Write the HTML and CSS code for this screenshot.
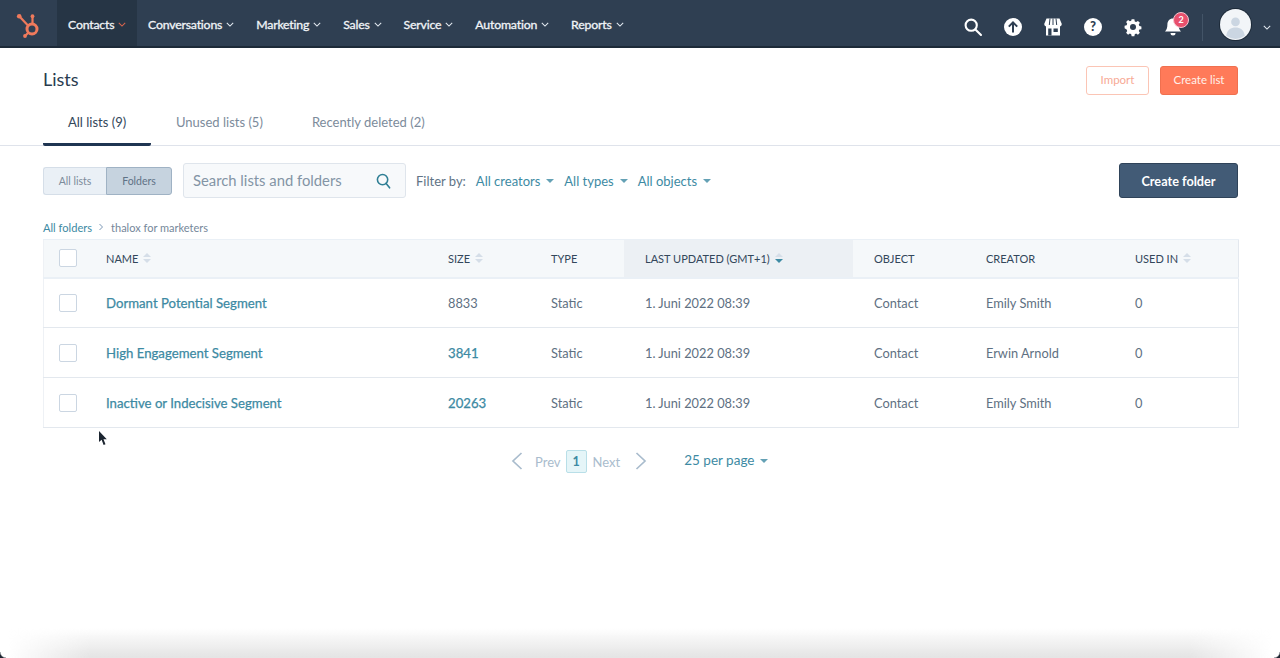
FILE: index.html
```html
<!DOCTYPE html>
<html lang="en">
<head>
<meta charset="utf-8">
<title>Lists</title>
<link rel="stylesheet" href="styles.css">
</head>
<body>
<header class="nav">
  <a class="logo" aria-label="HubSpot">
    <svg width="26" height="26" viewBox="0 0 26 26" fill="none">
      <circle cx="17" cy="17" r="5" stroke="#ef7a5c" stroke-width="3"/>
      <path d="M17.500 11V5" stroke="#ef7a5c" stroke-width="2.200"/>
      <circle cx="17.500" cy="4.200" r="1.900" fill="#ef7a5c"/>
      <path d="M13 13.500 5 5" stroke="#ef7a5c" stroke-width="2.200"/>
      <circle cx="4.200" cy="4.200" r="2.300" fill="#ef7a5c"/>
      <path d="M13.500 20.500 10 24" stroke="#ef7a5c" stroke-width="2.200"/>
      <circle cx="10" cy="24" r="1.900" fill="#ef7a5c"/>
    </svg>
  </a>
  <nav class="menu">
    <a class="menu-item menu-active">Contacts<svg class="chev chev-red" viewBox="0 0 10 6"><path d="M1 1l4 4 4-4"/></svg></a>
    <a class="menu-item">Conversations<svg class="chev" viewBox="0 0 10 6"><path d="M1 1l4 4 4-4"/></svg></a>
    <a class="menu-item">Marketing<svg class="chev" viewBox="0 0 10 6"><path d="M1 1l4 4 4-4"/></svg></a>
    <a class="menu-item">Sales<svg class="chev" viewBox="0 0 10 6"><path d="M1 1l4 4 4-4"/></svg></a>
    <a class="menu-item">Service<svg class="chev" viewBox="0 0 10 6"><path d="M1 1l4 4 4-4"/></svg></a>
    <a class="menu-item">Automation<svg class="chev" viewBox="0 0 10 6"><path d="M1 1l4 4 4-4"/></svg></a>
    <a class="menu-item">Reports<svg class="chev" viewBox="0 0 10 6"><path d="M1 1l4 4 4-4"/></svg></a>
  </nav>
  <div class="tools">
    <svg class="tool" viewBox="0 0 20 20" fill="none" stroke="#fff" stroke-width="2.100"><circle cx="8.200" cy="8.200" r="5.600"/><path d="M12.400 12.400 18 18" stroke-linecap="round"/></svg>
    <svg class="tool" viewBox="0 0 20 20"><circle cx="10" cy="10" r="9" fill="#fff"/><path d="M10 15.500V5.500M5.800 9.600 10 5.400l4.200 4.200" fill="none" stroke="#2f3f52" stroke-width="2"/></svg>
    <svg class="tool" viewBox="0 0 20 20"><path d="M3.500 1.500h13L18.800 7a2.400 2.400 0 0 1-1.800 2.400V18.500H3V9.400A2.400 2.400 0 0 1 1.200 7z" fill="#fff"/><path d="M7 1.500 6.300 8M10 1.500V8M13 1.500 13.700 8" stroke="#2f3f52" stroke-width="1"/><path d="M5.200 11.500h3.300v7H5.200zM10.500 11.500h4.300v3.500h-4.300z" fill="#2f3f52"/></svg>
    <svg class="tool" viewBox="0 0 20 20"><circle cx="10" cy="10" r="9" fill="#fff"/><text x="10" y="14.400" class="tool-q">?</text></svg>
    <svg class="tool" viewBox="0 0 20 20"><path d="M8.400 1h3.200l.5 2.400 1.600.7 2.100-1.300 2.300 2.300-1.300 2.100.7 1.600 2.400.5v3.200l-2.400.5-.7 1.600 1.300 2.100-2.300 2.300-2.100-1.300-1.600.7-.5 2.400H8.400l-.5-2.400-1.600-.7-2.100 1.300-2.300-2.300 1.300-2.100-.7-1.600L.1 11.600V8.400l2.400-.5.7-1.600-1.300-2.100 2.300-2.300 2.100 1.300 1.600-.7z" transform="translate(1.500 1.500) scale(.85)" fill="#fff"/><circle cx="10" cy="10" r="3" fill="#2f3f52"/></svg>
    <span class="bell">
      <svg class="tool" viewBox="0 0 20 20"><path d="M10 1.500c3.600 0 5.600 2.700 5.600 6 0 3.400.9 5.300 2.400 7H2c1.500-1.700 2.400-3.600 2.400-7 0-3.300 2-6 5.600-6z" fill="#fff"/><path d="M7.500 16h5a2.500 2.500 0 0 1-5 0z" fill="#fff"/></svg>
      <span class="badge">2</span>
    </span>
    <span class="tools-sep"></span>
    <span class="avatar">
      <svg viewBox="0 0 30 30" width="31" height="31"><circle cx="15" cy="15" r="15" fill="#f2f5f8"/><circle cx="15" cy="12.500" r="4.200" fill="#cbd6e2"/><path d="M6 26c1-6 4.500-8 9-8s8 2 9 8a15 15 0 0 1-18 0z" fill="#cbd6e2"/></svg>
    </span>
    <svg class="chev chev-user" viewBox="0 0 10 6"><path d="M1 1l4 4 4-4"/></svg>
  </div>
</header>

<main class="page">
  <div class="title-row">
    <h1 class="title">Lists</h1>
    <div class="title-actions">
      <button class="btn btn-import">Import</button>
      <button class="btn btn-create">Create list</button>
    </div>
  </div>

  <div class="tabs">
    <a class="tab tab-active">All lists (9)</a>
    <a class="tab tab-unused">Unused lists (5)</a>
    <a class="tab tab-deleted">Recently deleted (2)</a>
  </div>

  <div class="content">
    <div class="toolbar">
      <div class="toggle">
        <span class="toggle-item">All lists</span>
        <span class="toggle-item toggle-on">Folders</span>
      </div>
      <div class="search">
        <span class="search-text">Search lists and folders</span>
        <svg class="search-icon" viewBox="0 0 16 17" fill="none" stroke="#2f7f95" stroke-width="1.700"><circle cx="7" cy="7" r="5.500"/><path d="M10.600 11 14.500 15.800" stroke-linecap="round"/></svg>
      </div>
      <span class="filter-label">Filter by:</span>
      <a class="filter">All creators<i class="caret"></i></a>
      <a class="filter">All types<i class="caret"></i></a>
      <a class="filter">All objects<i class="caret"></i></a>
      <button class="btn-folder">Create folder</button>
    </div>

    <div class="crumbs">
      <a class="crumb-link">All folders</a>
      <svg class="crumb-sep" viewBox="0 0 6 8" fill="none" stroke="#7c98b6" stroke-width="1"><path d="M1.500 1l3 3-3 3"/></svg>
      <span class="crumb-here">thalox for marketers</span>
    </div>

    <table class="table">
      <thead>
        <tr>
          <th class="c-check"><span class="check"></span></th>
          <th class="c-name"><span class="th-in">NAME<span class="sort"><i class="up"></i><i class="down"></i></span></span></th>
          <th class="c-size"><span class="th-in">SIZE<span class="sort"><i class="up"></i><i class="down"></i></span></span></th>
          <th class="c-type"><span class="th-in">TYPE</span></th>
          <th class="c-date sorted"><span class="th-in">LAST UPDATED (GMT+1)<span class="sort"><i class="up"></i><i class="down down-on"></i></span></span></th>
          <th class="c-object"><span class="th-in">OBJECT</span></th>
          <th class="c-creator"><span class="th-in">CREATOR</span></th>
          <th class="c-used"><span class="th-in">USED IN<span class="sort"><i class="up"></i><i class="down"></i></span></span></th>
        </tr>
      </thead>
      <tbody>
        <tr>
          <td class="c-check"><span class="check"></span></td>
          <td class="c-name"><a class="link">Dormant Potential Segment</a></td>
          <td class="c-size">8833</td>
          <td class="c-type">Static</td>
          <td class="c-date">1. Juni 2022 08:39</td>
          <td class="c-object">Contact</td>
          <td class="c-creator">Emily Smith</td>
          <td class="c-used">0</td>
        </tr>
        <tr>
          <td class="c-check"><span class="check"></span></td>
          <td class="c-name"><a class="link">High Engagement Segment</a></td>
          <td class="c-size"><a class="link">3841</a></td>
          <td class="c-type">Static</td>
          <td class="c-date">1. Juni 2022 08:39</td>
          <td class="c-object">Contact</td>
          <td class="c-creator">Erwin Arnold</td>
          <td class="c-used">0</td>
        </tr>
        <tr>
          <td class="c-check"><span class="check"></span></td>
          <td class="c-name"><a class="link">Inactive or Indecisive Segment</a></td>
          <td class="c-size"><a class="link">20263</a></td>
          <td class="c-type">Static</td>
          <td class="c-date">1. Juni 2022 08:39</td>
          <td class="c-object">Contact</td>
          <td class="c-creator">Emily Smith</td>
          <td class="c-used">0</td>
        </tr>
      </tbody>
    </table>

    <div class="pager">
      <svg class="pager-arrow" viewBox="0 0 12 18" fill="none" stroke="#a9bccd" stroke-width="1.700"><path d="M10.500 1 2 9l8.500 8"/></svg>
      <span class="pager-word">Prev</span>
      <span class="pager-num">1</span>
      <span class="pager-word">Next</span>
      <svg class="pager-arrow" viewBox="0 0 12 18" fill="none" stroke="#a9bccd" stroke-width="1.700"><path d="M1.500 1 10 9l-8.500 8"/></svg>
      <a class="per-page">25 per page<i class="caret"></i></a>
    </div>
  </div>
</main>

<svg class="cursor" width="10" height="15" viewBox="0 0 10 15"><path d="M1 0v11l2.600-2.300L5.600 14l1.900-.8-2-5h3.300z" fill="#1c2530"/></svg>
<div class="window-edge"></div>
<div class="corner corner-left"></div>
<div class="corner corner-right"></div>
</body>
</html>
```

FILE: styles.css
```css
* { box-sizing: border-box; }

html, body {
  margin: 0;
  height: 100%;
  overflow: hidden;
}

body {
  position: relative;
  background: #fff;
  color: #33475b;
  font-family: Lato, "Liberation Sans", sans-serif;
}

/* Top navigation */
.nav {
  display: flex;
  align-items: stretch;
  height: 48px;
  background: #2f3f52;
  border-bottom: 2px solid #1d2a38;
}

.logo {
  display: flex;
  align-items: center;
  width: 57px;
  padding: 4px 0 0 15px;
}

.menu {
  display: flex;
}

.menu-item {
  display: flex;
  align-items: center;
  gap: 4px;
  padding: 2px 11px 0;
  color: #f2f5f8;
  font-size: 12.300px;
  font-weight: 400;
  letter-spacing: -.2px;
  -webkit-text-stroke: .3px #f2f5f8;
  white-space: nowrap;
}

.menu-active {
  background: #263545;
  width: 80px;
}

.chev {
  width: 8px;
  height: 5px;
  fill: none;
  stroke: #e4ebf2;
  stroke-width: 1.300;
  flex: none;
}

.chev-red { stroke: #d9644d; }

.tools {
  display: flex;
  align-items: center;
  margin-left: auto;
  padding: 8px 9px 0 0;
  gap: 20px;
}

.tool {
  display: block;
  width: 20px;
  height: 20px;
}

.tool-q {
  font-family: Lato, sans-serif;
  font-size: 13px;
  font-weight: 900;
  text-anchor: middle;
  fill: #2f3f52;
}

.bell { position: relative; }

.badge {
  position: absolute;
  top: -5px;
  left: 10px;
  width: 16px;
  height: 16px;
  border-radius: 50%;
  background: #e8506d;
  border: 1px solid #f4c5cf;
  color: #fff;
  font-size: 9px;
  font-weight: 700;
  line-height: 14px;
  text-align: center;
}

.tools-sep {
  width: 1px;
  height: 27px;
  margin-left: -1px;
  background: #435467;
}

.avatar {
  display: block;
  width: 31px;
  height: 31px;
  margin: -6px 0 0 -3px;
  border-radius: 50%;
  box-shadow: 0 0 0 1px #1d2a38;
}

.avatar svg { display: block; }

.chev-user {
  margin-left: -8px;
}

/* Title */
.title-row {
  display: flex;
  align-items: center;
  justify-content: space-between;
  height: 66px;
  padding: 0 42px 5px 43px;
}

.title {
  margin: 0;
  font-size: 18px;
  font-weight: 400;
  color: #2a3c4f;
}

.title-actions {
  display: flex;
  gap: 11px;
  margin-top: 3px;
}

.btn {
  height: 29px;
  border-radius: 3px;
  font-family: inherit;
  font-size: 11.500px;
  padding: 0 0 2px;
}

.btn-import {
  width: 63px;
  background: #fff;
  border: 1px solid #fbc5b5;
  color: #f7a995;
}

.btn-create {
  width: 78px;
  background: #ff7a59;
  border: 1px solid #f0704f;
  color: #fff0ea;
}

/* Tabs */
.tabs {
  display: flex;
  height: 32px;
  border-bottom: 1px solid #dfe3eb;
  padding-left: 43px;
}

.tab {
  height: 32px;
  font-size: 13px;
  line-height: 16px;
  color: #7c8b9b;
  white-space: nowrap;
}

.tab-active {
  width: 108px;
  padding-left: 25px;
  color: #33475b;
  border-bottom: 3px solid #1f3552;
  border-radius: 0 0 2px 2px;
}

.tab-unused { margin-left: 25px; }

.tab-deleted { margin-left: 49px; }

/* Content */
.content {
  padding: 17px 42px 0 43px;
}

.toolbar {
  display: flex;
  align-items: center;
  height: 35px;
}

.toggle {
  display: flex;
  height: 28px;
  margin-top: 1px;
}

.toggle-item {
  display: flex;
  align-items: center;
  justify-content: center;
  font-size: 10.500px;
  color: #7c8b9b;
  background: #eaf0f6;
  border: 1px solid #d5dee8;
}

.toggle-item:first-child {
  width: 63px;
  border-right: 0;
  border-radius: 3px 0 0 3px;
}

.toggle-on {
  width: 66px;
  background: #c6d3df;
  border-color: #9fb2c4;
  color: #5f7286;
  border-radius: 0 3px 3px 0;
}

.search {
  display: flex;
  align-items: center;
  justify-content: space-between;
  width: 223px;
  height: 35px;
  margin-left: 11px;
  padding: 0 14px 0 9px;
  background: #f7f9fb;
  border: 1px solid #dfe5ec;
  border-radius: 3px;
}

.search-text {
  margin-top: -1px;
  font-size: 14.800px;
  color: #8394a5;
}

.search-icon {
  width: 15px;
  height: 16px;
}

.filter-label {
  margin-left: 10px;
  font-size: 13px;
  color: #617486;
}

.filter {
  display: flex;
  align-items: center;
  margin-left: 10px;
  font-size: 13px;
  color: #3d8aa3;
}

.caret {
  width: 0;
  height: 0;
  margin-left: 6px;
  margin-top: 1px;
  border-left: 4px solid transparent;
  border-right: 4px solid transparent;
  border-top: 4px solid currentColor;
  opacity: .8;
}

.btn-folder {
  width: 119px;
  height: 35px;
  margin-left: auto;
  background: #425b76;
  border: 1px solid #2f4359;
  border-radius: 3px;
  color: #fff;
  font-family: inherit;
  font-size: 12.700px;
  font-weight: 700;
  padding: 0;
}

.crumbs {
  display: flex;
  align-items: center;
  height: 14px;
  margin-top: 22px;
  font-size: 11.100px;
}

.crumb-link { color: #3d8aa3; }

.crumb-sep {
  width: 6px;
  height: 8px;
  margin: 0 7px 0 6px;
}

.crumb-here {
  color: #75879a;
  font-size: 11px;
}

/* Table */
.table {
  width: 1194.500px;
  margin-top: 5px;
  border-collapse: collapse;
  table-layout: fixed;
  border-bottom: 1px solid #e3e8ee;
  border-left: 1px solid #eef1f5;
  border-right: 1px solid #e3e8ee;
}

.table th {
  height: 38px;
  padding: 0;
  background: #f5f8fa;
  text-align: left;
  font-size: 11px;
  font-weight: 400;
  color: #33475b;
  border-bottom: 2px solid #eaf0f6;
  border-top: 1px solid #eaf0f6;
  white-space: nowrap;
}

.table td {
  height: 50px;
  padding: 0;
  font-size: 12.800px;
  color: #5e7082;
  border-bottom: 1px solid #e3e8ee;
}

.table tr:last-child td { border-bottom: 0; }

.c-check { width: 62.500px; padding-left: 15px !important; }
.c-name { width: 342px; }
.c-size { width: 103px; }
.c-type { width: 73px; }
.c-date { width: 229px; padding-left: 21px !important; }
.c-object { width: 133px; padding-left: 21px !important; }
.c-creator { width: 149px; }
.c-used { width: 103px; }

.table th.sorted { background: #ecf0f4; }

.th-in {
  display: flex;
  align-items: center;
}

.check {
  display: block;
  width: 18px;
  height: 18px;
  background: #fff;
  border: 1.500px solid #cbd6e2;
  border-radius: 2px;
}

.sort {
  display: flex;
  flex-direction: column;
  gap: 2px;
  margin-left: 5px;
}

.sort i {
  width: 0;
  height: 0;
  border-left: 4px solid transparent;
  border-right: 4px solid transparent;
}

.sort .up { border-bottom: 4px solid #d5dee8; }
.sort .down { border-top: 4px solid #d5dee8; }
.sort .down-on { border-top-color: #3d8aa3; }

.link {
  color: #3d8aa3;
  font-size: 13.200px;
  font-weight: 400;
  -webkit-text-stroke: .25px #3d8aa3;
}

/* Pager */
.pager {
  display: flex;
  align-items: center;
  height: 26px;
  margin-top: 20px;
  padding-left: 468px;
}

.pager-arrow {
  width: 12px;
  height: 18px;
}

.pager-word {
  font-size: 13px;
  color: #a9bccd;
  margin: 2px 6px 0 5px;
}

.pager-arrow + .pager-word {
  margin-left: 12px;
  margin-right: 5px;
}

.pager-word:has(+ .pager-arrow) {
  margin-left: 6px;
  margin-right: 15px;
}

.pager-num {
  width: 21px;
  height: 23px;
  margin-top: 1px;
  background: #e5f5f8;
  border: 1px solid #b9dfe8;
  border-radius: 2px;
  color: #3d8aa3;
  font-size: 12.500px;
  font-weight: 700;
  line-height: 21px;
  text-align: center;
}

.per-page {
  display: flex;
  align-items: center;
  margin-left: 37px;
  margin-top: -2px;
  font-size: 13.500px;
  color: #3d8aa3;
}

/* Overlays */
.cursor {
  position: absolute;
  left: 98px;
  top: 431px;
}

.window-edge {
  position: absolute;
  left: 0;
  right: 0;
  bottom: 0;
  height: 30px;
  pointer-events: none;
  background: linear-gradient(to bottom, rgba(226,226,226,0), rgba(226,226,226,.9) 95%);
  -webkit-mask-image: linear-gradient(to right, transparent 8px, #000 90px, #000 calc(100% - 90px), transparent calc(100% - 8px));
  mask-image: linear-gradient(to right, transparent 8px, #000 90px, #000 calc(100% - 90px), transparent calc(100% - 8px));
}

.corner {
  position: absolute;
  bottom: 0;
  width: 6px;
  height: 6px;
}

.corner-left {
  left: 0;
  background: radial-gradient(circle at 100% 0, transparent 5px, #1c2530 6.500px);
}

.corner-right {
  right: 0;
  background: radial-gradient(circle at 0 0, transparent 5px, #1c2530 6.500px);
}
```
